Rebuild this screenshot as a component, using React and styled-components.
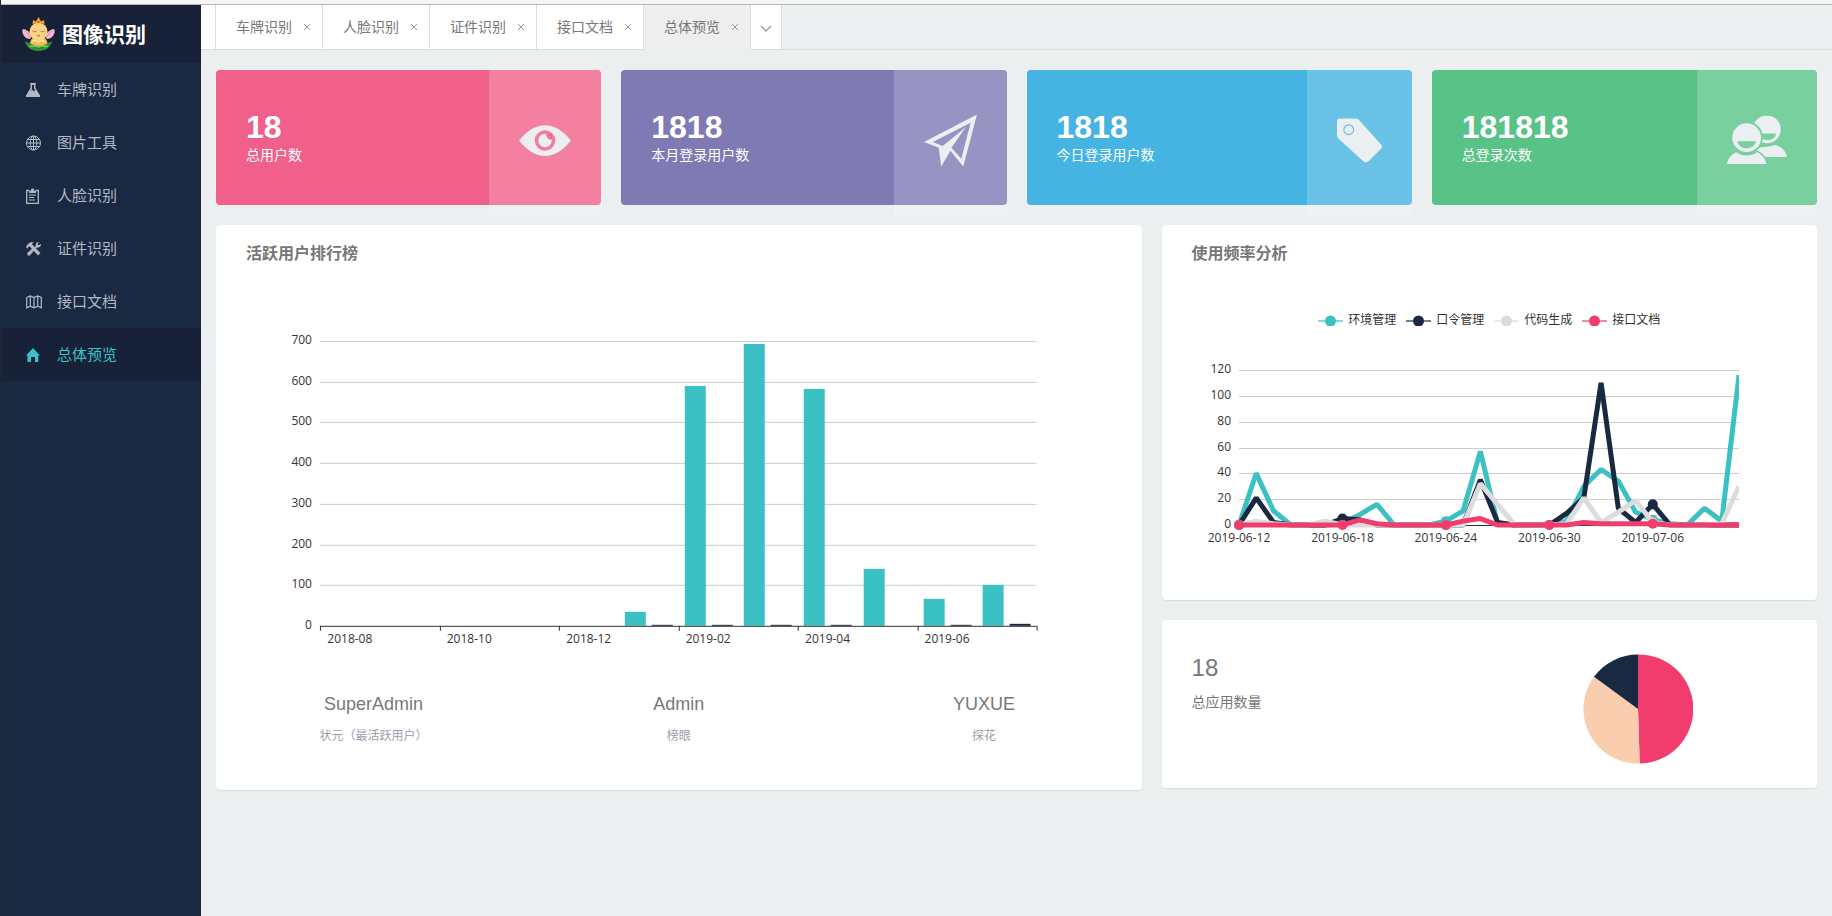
import React from 'react';
import styled, { createGlobalStyle } from 'styled-components';

const GlobalStyle = createGlobalStyle`
  * {
    box-sizing: border-box;
  }
  body {
    margin: 0;
    background: #ebeff0;
    color: #777;
    font-family: "Liberation Sans", "Noto Sans CJK SC", sans-serif;
    font-size: 14px;
  }
  h1, h2, p, ul {
    margin: 0;
    padding: 0;
  }
`;

const Page = styled.div`
  display: flex;
  flex-direction: column;
  min-height: 100vh;
  border-left: 1px solid #262630;
`;

const TopStrip = styled.div`
  height: 5px;
  background: #f5f5f5;
  border-bottom: 1px solid #b4b6b7;
`;

const Body = styled.div`
  display: flex;
  flex: 1;
`;

const Sidebar = styled.aside`
  flex: none;
  width: 200px;
  background: #1a2942;
`;

const Brand = styled.div`
  display: flex;
  align-items: center;
  gap: 7px;
  height: 58px;
  padding: 2px 0 0 21px;
  background: #172238;

  h1 {
    color: #fff;
    font-size: 21px;
    line-height: 30px;
  }
`;

const NavLink = styled.a`
  display: flex;
  align-items: center;
  gap: 15px;
  height: 53px;
  padding-left: 25px;
  font-size: 15px;
  line-height: 20px;
  text-decoration: none;
  color: ${props => (props.$active ? '#3bc0c3' : '#b2b8c2')};
  background: ${props => (props.$active ? '#172238' : 'transparent')};
`;

const Main = styled.main`
  flex: 1;
  min-width: 0;
`;

const TabBar = styled.div`
  display: flex;
  height: 45px;
`;

const TabEdge = styled.div`
  width: 15px;
  background: #fff;
  border-right: 1px solid #ddd;
  border-bottom: 1px solid #ddd;
`;

const TabRest = styled.div`
  flex: 1;
  border-bottom: 1px solid #ddd;
`;

const Tab = styled.div`
  display: flex;
  align-items: center;
  gap: 7px;
  padding: 0 7px 0 20px;
  background: ${props => (props.$active ? '#eee' : '#fff')};
  border-right: 1px solid #ddd;
  border-bottom: 1px solid ${props => (props.$active ? '#eee' : '#ddd')};

  a {
    color: #777;
    line-height: 20px;
    text-decoration: none;
    white-space: nowrap;
  }
`;

const IconButton = styled.button`
  display: flex;
  align-items: center;
  justify-content: center;
  width: 16px;
  height: 16px;
  padding: 0;
  border: 0;
  background: none;
  color: #999;
`;

const MoreTabs = styled(IconButton)`
  width: 31px;
  height: 45px;
  padding-top: 4px;
  background: #fff;
  border-right: 1px solid #ddd;
  border-bottom: 1px solid #ddd;
`;

const Dashboard = styled.div`
  display: grid;
  grid-template-columns: repeat(12, 1fr);
  gap: 20px;
  align-items: start;
  padding: 20px 15px;
`;

const StatCard = styled.section`
  grid-column: span 3;
  display: flex;
  justify-content: space-between;
  height: 135px;
  border-radius: 4px;
  background: ${props => props.$color};
  color: #fff;
`;

const StatText = styled.div`
  padding: 41px 0 0 30px;

  strong {
    display: block;
    margin-bottom: 2px;
    font-size: 32px;
    line-height: 32px;
  }
  p {
    line-height: 20px;
  }
`;

/* the lighter strip hangs a little below the card */
const StatIcon = styled.div`
  display: flex;
  align-items: center;
  height: 146px;
  padding: 0 30px 6px;
  background: rgba(255, 255, 255, 0.2);
  border-top-right-radius: 4px;
  color: #ebeff1;
`;

const Panel = styled.section`
  border-radius: 4px;
  background: #fff;
  box-shadow: 0 1px 1px rgba(0, 0, 0, 0.08);
  padding: ${props => props.$padding};
`;

const RankPanel = styled(Panel)`
  grid-column: span 7;
`;

const SideColumn = styled.div`
  grid-column: span 5;
  display: flex;
  flex-direction: column;
  gap: 20px;
`;

const PanelTitle = styled.h2`
  font-size: 16px;
  font-weight: 700;
  line-height: 24px;
`;

const Chart = styled.svg`
  display: block;
  width: 100%;
  font-family: "Open Sans", "Noto Sans CJK SC", sans-serif;
  font-size: 12px;
  fill: #333;
`;

const RankList = styled.div`
  display: grid;
  grid-template-columns: repeat(3, 1fr);
  margin: 26px -25px 0;
  text-align: center;
`;

const Rank = styled.div`
  strong {
    display: block;
    font-size: 18px;
    font-weight: 400;
    line-height: 24px;
  }
  p {
    margin-top: 10px;
    color: #98a0ac;
    font-size: 12px;
    line-height: 20px;
  }
`;

const Legend = styled.ul`
  display: flex;
  justify-content: center;
  gap: 10px;
  margin-top: 44px;
  list-style: none;

  li {
    display: flex;
    align-items: center;
    gap: 5px;
    color: #333;
    font-size: 12px;
    line-height: 20px;
  }
`;

const AppCount = styled(Panel)`
  display: grid;
  grid-template-columns: repeat(2, 1fr);

  strong {
    display: block;
    margin-bottom: 10px;
    font-size: 24px;
    font-weight: 400;
    line-height: 28px;
  }
  p {
    line-height: 20px;
  }
  svg {
    justify-self: center;
  }
`;

const FlaskIcon = () => (
  <svg width="16" height="16" viewBox="0 0 16 16" fill="currentColor">
    <path fillRule="evenodd" d="M4 1h6v1H9.500v4L14 13.500V15H0v-1.500L4.500 6V2H4zM6 3v4l-1 2 1.500-1L8 9.500 9 8 8 6V3z" />
  </svg>
);

const GlobeIcon = () => (
  <svg width="16" height="16" viewBox="0 0 16 16" fill="none" stroke="currentColor">
    <circle cx="7.500" cy="8" r="7" />
    <ellipse cx="7.500" cy="8" rx="3.300" ry="7" />
    <path d="M7.500 1v14M.5 8h14M1.500 4.500h12M1.500 11.500h12" />
  </svg>
);

const ClipboardIcon = () => (
  <svg width="16" height="16" viewBox="0 0 16 16" fill="none" stroke="currentColor">
    <path d="M3.500 2.500H.7v12.800h11.600V2.500H9.500" strokeWidth="1.300" />
    <path d="M3 5V3h1.500L5.500.5h2L8.500 3H10v2z" fill="currentColor" stroke="none" />
    <path d="M3 7h7M3 9.500h5M3 12h6" strokeWidth="1.200" />
  </svg>
);

const ToolsIcon = () => (
  <svg width="16" height="16" viewBox="0 0 16 16" fill="currentColor">
    <path d="M0 6.500 1 4l3.200-2.700L7.500 1 6 3.200 14.500 12 12 14.500 4 5.800 2.800 5.500 1.500 7.500z" />
    <path d="m1 12.300 5.500-5 2 2-5 5.500-1.500-.2zM8.500 6l1.300-1.300C9.500 2.500 11 .8 13 1l-1.500 2 1.200 1.300L15 3c.3 2-1.500 3.800-3.700 3.400L10.200 7.500z" />
  </svg>
);

const MapIcon = () => (
  <svg width="16" height="16" viewBox="0 0 16 16" fill="none" stroke="currentColor" strokeWidth="1.200">
    <path d="M.7 3.500 4.300 2 8 3.500 11.700 2l3.600 1.500v10.300l-3.600-1.600L8 13.800l-3.700-1.600L.7 13.800zM4.300 2v10.200M8 3.500v10.300M11.700 2v10.200" />
  </svg>
);

const HomeIcon = () => (
  <svg width="16" height="16" viewBox="0 0 16 16" fill="currentColor">
    <path d="M7 1 0 8.500h1.500V15H5v-5h4v5h3.300V8.500H14z" />
  </svg>
);

const LogoIcon = () => (
  <svg width="33" height="36" viewBox="0 0 33 36">
    <path d="M8 22C2 22-1 15 1 12c3 0 7 3 9 7zM25 22c6 0 9-7 7-10-3 0-7 3-9 7z" fill="#f3b9cf" />
    <path d="M3 14c2 1 4 4 5 6M30 14c-2 1-4 4-5 6" stroke="#d884ab" fill="none" />
    <path d="M3 24c3 2 5 2 7 2h13c2 0 4 0 7-2-1 6-6 10-13.500 10S4 30 3 24z" fill="#2c9136" />
    <path d="M7 29c3 2 5-2 9.500 1 4.500-3 7 1 9.500-1" stroke="#7ccb4b" strokeWidth="1.500" fill="none" />
    <path d="M8 26c1-5 4-7 8.500-7s8 2 9 7c-3 4-14 4-17.500 0z" fill="#f5b955" />
    <circle cx="16.500" cy="14.500" r="9" fill="#fbd185" />
    <path d="M10.500 7 11 3l3 1.500L16.500 0 19 4.500 22 3l.5 4c-4-1.500-8-1.500-12 0z" fill="#f0aa25" />
    <circle cx="16.500" cy="5" r="1" fill="#d8413c" />
    <path d="M10.500 14c1 1 3 1 4 0M18.500 14c1 1 3 1 4 0M15 18.500q1.500 1 3 0" stroke="#ac672a" fill="none" />
    <path d="M10 25c2-2 4-2 6.500 0 2.500-2 4.500-2 6.500 0" stroke="#fbe1a1" strokeWidth="2" fill="none" />
  </svg>
);

const EyeIcon = ({ color }) => (
  <svg width="52" height="31" viewBox="0 0 52 31">
    <path d="M0 15.500C16-5 36-5 52 15.500 36 36 16 36 0 15.500z" fill="currentColor" />
    <circle cx="26" cy="15.500" r="8.500" fill="none" stroke={color} strokeOpacity="0.800" strokeWidth="3.500" />
    <path d="M27 9a5 5 0 0 0 6 5.500V9z" fill={color} fillOpacity="0.800" />
  </svg>
);

const PlaneIcon = () => (
  <svg width="53" height="53" viewBox="0 0 54 53">
    <path fillRule="evenodd" fill="currentColor" d="M54 0 0 28l15 6 2.500 19L27 37l13 16zM9 28 47.500 8.500 38 45 28 34 42.500 13 19 32z" />
  </svg>
);

const TagIcon = ({ color }) => (
  <svg width="45" height="45" viewBox="0 0 46 45">
    <path d="M3 0h16q2 0 3.500 1.500L45 26.500q2 2 0 4.500L32.500 43.500q-3 3-6 0L2 21q-2-2-2-4V3q0-3 3-3z" fill="currentColor" />
    <circle cx="12" cy="11.500" r="5" fill="none" stroke={color} strokeOpacity="0.800" strokeWidth="1.200" />
  </svg>
);

const UsersIcon = () => (
  <svg width="60" height="50" viewBox="0 0 61 50" fill="currentColor">
    <mask id="behind">
      <path d="M0 0h61v50H0z" fill="#fff" />
      <circle cx="20" cy="22.500" r="16.500" fill="#000" />
      <path d="M0 50C1 43 5 38 10 37h20c5 2 9 6 10 13z" fill="#000" stroke="#000" strokeWidth="3" />
    </mask>
    <g mask="url(#behind)">
      <path fillRule="evenodd" d="M40.500 0a14.200 14.200 0 1 1 0 28.400 14.200 14.200 0 0 1 0-28.400zM33 18.300h17c-2 9-15 9-17 0z" />
      <path d="M30 42.300V33c7-1 13-1 18-3 7 1 12 6 13 12.300z" />
    </g>
    <path fillRule="evenodd" d="M20 8a14.600 14.600 0 1 1 0 29.200A14.600 14.600 0 0 1 20 8zm-9.500 18.300c2 9.500 17 9.500 19 0z" />
    <path d="M0 49.500C1 43 5 39.500 9.500 37.500c6 4.500 15 4.500 21 0C35 39.500 39 43 40 49.500z" />
  </svg>
);

const navItems = [
  { name: '车牌识别', icon: FlaskIcon },
  { name: '图片工具', icon: GlobeIcon },
  { name: '人脸识别', icon: ClipboardIcon },
  { name: '证件识别', icon: ToolsIcon },
  { name: '接口文档', icon: MapIcon },
  { name: '总体预览', icon: HomeIcon },
];

const tabs = ['车牌识别', '人脸识别', '证件识别', '接口文档', '总体预览'];

const stats = [
  { value: '18', label: '总用户数', color: '#f1608a', icon: EyeIcon },
  { value: '1818', label: '本月登录用户数', color: '#7f79b4', icon: PlaneIcon },
  { value: '1818', label: '今日登录用户数', color: '#45b4e2', icon: TagIcon },
  { value: '181818', label: '总登录次数', color: '#59c387', icon: UsersIcon },
];

const ranks = [
  { name: 'SuperAdmin', place: '状元（最活跃用户）' },
  { name: 'Admin', place: '榜眼' },
  { name: 'YUXUE', place: '探花' },
];

const months = ['2018-08', '2018-10', '2018-12', '2019-02', '2019-04', '2019-06'];
const logins = [0, 0, 0, 0, 0, 35, 590, 692, 581, 141, 66, 100];
const errors = [0, 0, 0, 0, 0, 3, 3, 3, 3, 1, 3, 5];

const days = ['2019-06-12', '2019-06-18', '2019-06-24', '2019-06-30', '2019-07-06'];
const series = [
  {
    name: '环境管理',
    color: '#3bc0c3',
    data: [0, 40, 11, 0, 0, 0, 1, 8, 16, 0, 0, 0, 3, 11, 57, 1, 0, 0, 0, 3, 30, 43, 34, 10, 4, 1, 0, 13, 3, 116],
  },
  {
    name: '口令管理',
    color: '#1a2942',
    data: [0, 21, 2, 0, 0, 0, 5, 4, 0, 0, 0, 0, 0, 0, 35, 2, 0, 0, 0, 9, 21, 110, 13, 2, 16, 0, 0, 0, 0, 0],
  },
  {
    name: '代码生成',
    color: '#dcdcdc',
    data: [0, 3, 1, 0, 0, 3, 0, 0, 0, 0, 0, 0, 0, 0, 32, 16, 0, 0, 0, 1, 21, 2, 10, 19, 2, 0, 0, 0, 1, 30],
  },
  {
    name: '接口文档',
    color: '#f13c6e',
    data: [0, 0, 0, 0, 0, 0, 0, 4, 1, 0, 0, 0, 0, 3, 5, 0, 0, 0, 0, 0, 2, 1, 1, 1, 1, 0, 0, 0, 0, 0],
  },
];

function BarChart() {
  const left = 74;
  const right = 791;
  const bottom = 360;
  const step = (right - left) / 12;
  const x = i => Math.round(left + i * step);
  const y = value => bottom - Math.round((value * 285) / 700);

  return (
    <Chart height="400" viewBox="0 0 866 400" preserveAspectRatio="xMinYMin meet">
      {[0, 100, 200, 300, 400, 500, 600, 700].map(value => (
        <g key={value}>
          {value > 0 && <path d={`M${left} ${y(value) + 0.5}H${right}`} stroke="#ccc" />}
          <text x="66" y={y(value) + 3} textAnchor="end">{value}</text>
        </g>
      ))}
      {logins.map((value, i) => (
        <g key={i}>
          <rect x={x(i) + 6} y={y(value)} width="21" height={bottom - y(value)} fill="#3bc0c3" />
          <rect x={x(i) + 33} y={y(errors[i])} width="21" height={bottom - y(errors[i])} fill="#1a2942" />
        </g>
      ))}
      <path d={`M${left} ${bottom + 0.5}H${right}`} stroke="#333" />
      {[0, 2, 4, 6, 8, 10, 12].map(i => (
        <path key={i} d={`M${x(i) + 0.5} ${bottom}v5`} stroke="#333" />
      ))}
      {months.map((month, i) => (
        <text key={month} x={left + (i * 2 + 0.5) * step} y="377" textAnchor="middle">{month}</text>
      ))}
    </Chart>
  );
}

function LineChart() {
  const left = 47;
  const right = 547;
  const bottom = 195;
  const x = i => left + (i * (right - left)) / 29;
  const y = value => bottom - (value * 155) / 120;

  return (
    <Chart height="225" viewBox="0 0 595 225" preserveAspectRatio="xMinYMin meet">
      <clipPath id="plot">
        <path d={`M${left - 6} 30H${right}V205H${left - 6}z`} />
      </clipPath>
      {[0, 20, 40, 60, 80, 100, 120].map(value => (
        <g key={value}>
          <path
            d={`M${left} ${Math.round(y(value)) + 0.5}H${right}`}
            stroke={value === 0 ? '#333' : '#ccc'}
          />
          <text x="39" y={Math.round(y(value)) + 3} textAnchor="end">{value}</text>
        </g>
      ))}
      <g clipPath="url(#plot)">
        {series.map(({ name, color, data }) => (
          <g key={name}>
            <polyline
              points={data.map((value, i) => `${x(i)},${y(value)}`).join(' ')}
              fill="none"
              stroke={color}
              strokeWidth="5"
              strokeLinejoin="bevel"
            />
            {[0, 6, 12, 18, 24].map(i => (
              <circle key={i} cx={x(i)} cy={y(data[i])} r="5" fill={color} />
            ))}
          </g>
        ))}
      </g>
      {days.map((day, i) => (
        <text key={day} x={x(i * 6)} y="212" textAnchor="middle">{day}</text>
      ))}
    </Chart>
  );
}

function PieChart() {
  return (
    <svg width="110" height="110" viewBox="-55 -55 110 110">
      <path d="M0 0V-54.500A54.500 54.500 0 0 1 1.700 54.500z" fill="#f13c6e" />
      <path d="M0 0 1.700 54.500A54.500 54.500 0 0 1-44-32.200z" fill="#f9cdae" />
      <path d="M0 0-44-32.200A54.500 54.500 0 0 1 0-54.500z" fill="#1a2942" />
    </svg>
  );
}

export default function App() {
  return (
    <Page>
      <GlobalStyle />
      <TopStrip />
      <Body>
        <Sidebar>
          <Brand>
            <LogoIcon />
            <h1>图像识别</h1>
          </Brand>
          <nav>
            {navItems.map(({ name, icon: Icon }) => (
              <NavLink key={name} href="#" $active={name === '总体预览'}>
                <Icon />
                {name}
              </NavLink>
            ))}
          </nav>
        </Sidebar>

        <Main>
          <TabBar>
            <TabEdge />
            {tabs.map(name => (
              <Tab key={name} $active={name === '总体预览'}>
                <a href="#">{name}</a>
                <IconButton type="button" aria-label={`关闭${name}`}>
                  <svg width="8" height="8" viewBox="0 0 8 8" stroke="currentColor">
                    <path d="M1 1l6 6M7 1 1 7" />
                  </svg>
                </IconButton>
              </Tab>
            ))}
            <MoreTabs type="button" aria-label="更多">
              <svg width="12" height="8" viewBox="0 0 12 8" fill="none" stroke="currentColor">
                <path d="m1 1 5 5 5-5" strokeWidth="1.300" />
              </svg>
            </MoreTabs>
            <TabRest />
          </TabBar>

          <Dashboard>
            {stats.map(({ value, label, color, icon: Icon }) => (
              <StatCard key={label} $color={color}>
                <StatText>
                  <strong>{value}</strong>
                  <p>{label}</p>
                </StatText>
                <StatIcon>
                  <Icon color={color} />
                </StatIcon>
              </StatCard>
            ))}

            <RankPanel $padding="17px 30px 44px">
              <PanelTitle>活跃用户排行榜</PanelTitle>
              <BarChart />
              <RankList>
                {ranks.map(({ name, place }) => (
                  <Rank key={name}>
                    <strong>{name}</strong>
                    <p>{place}</p>
                  </Rank>
                ))}
              </RankList>
            </RankPanel>

            <SideColumn>
              <Panel $padding="17px 30px 45px">
                <PanelTitle>使用频率分析</PanelTitle>
                <Legend>
                  {series.map(({ name, color }) => (
                    <li key={name}>
                      <svg width="25" height="12" viewBox="0 0 25 12">
                        <path d="M0 7h25" stroke={color} strokeWidth="2" opacity="0.600" />
                        <circle cx="12.500" cy="7" r="5.500" fill={color} />
                      </svg>
                      {name}
                    </li>
                  ))}
                </Legend>
                <LineChart />
              </Panel>
              <AppCount $padding="34px 30px 24px">
                <div>
                  <strong>18</strong>
                  <p>总应用数量</p>
                </div>
                <PieChart />
              </AppCount>
            </SideColumn>
          </Dashboard>
        </Main>
      </Body>
    </Page>
  );
}
